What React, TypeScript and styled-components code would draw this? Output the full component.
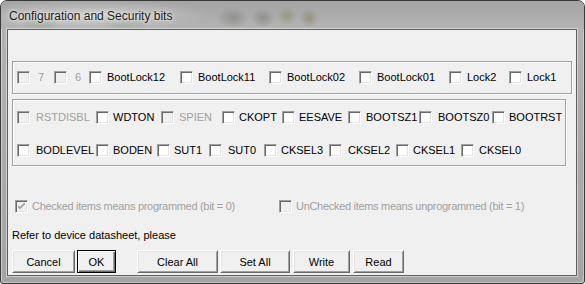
import React from "react";
import styled, { createGlobalStyle } from "styled-components";

const GlobalStyle = createGlobalStyle`
  html, body { margin: 0; padding: 0; background: #ffffff; }
  body { font-family: "Liberation Sans", Arial, sans-serif; }
`;

const Window = styled.div`
  box-sizing: border-box;
  width: 585px;
  height: 284px;
  border: 1px solid #3a3a3a;
  border-radius: 7px 7px 3px 3px;
  background: linear-gradient(to bottom, #a6a6a6 0px, #b2b2b2 28px, #ababab 140px, #a4a4a4 284px);
  box-shadow: inset 1px 1px 0 rgba(255, 255, 255, 0.45), inset -1px -1px 0 rgba(255, 255, 255, 0.35);
  padding: 0 7px 7px 6px;
  display: flex;
  flex-direction: column;
  overflow: hidden;
`;

const TitleBar = styled.div`
  height: 28px;
  flex: none;
  margin: 0 -7px 0 -6px;
  padding-left: 8px;
  display: flex;
  align-items: center;
  background:
    radial-gradient(ellipse 16px 11px at 232px 17px, rgba(70, 70, 60, 0.28), transparent),
    radial-gradient(ellipse 12px 10px at 262px 17px, rgba(70, 80, 60, 0.3), transparent),
    radial-gradient(ellipse 10px 10px at 286px 15px, rgba(110, 120, 50, 0.35), transparent),
    radial-gradient(ellipse 10px 10px at 308px 17px, rgba(110, 100, 40, 0.35), transparent),
    radial-gradient(ellipse 20px 8px at 40px 25px, rgba(90, 140, 90, 0.25), transparent),
    radial-gradient(ellipse 25px 8px at 125px 25px, rgba(90, 140, 90, 0.2), transparent),
    radial-gradient(ellipse 120px 16px at 90px 14px, rgba(225, 225, 225, 0.55), transparent),
    linear-gradient(to bottom, #a4a4a4, #b4b4b4);
`;

const Title = styled.span`
  font-family: "Liberation Sans", Arial, sans-serif;
  font-size: 12px;
  color: #1a1a1a;
  text-shadow: 0 0 6px rgba(255, 255, 255, 0.9), 0 0 3px rgba(255, 255, 255, 0.8);
  margin-top: 1px;
`;

const Client = styled.div`
  flex: 1;
  box-sizing: border-box;
  background: #f0f0f0;
  border: 1px solid #5e5e5e;
  box-shadow: 0 0 0 1px rgba(235, 235, 235, 0.6);
  padding: 31px 4px 0 4px;
  display: flex;
  flex-direction: column;
  font-family: "Liberation Sans", Arial, sans-serif;
  font-size: 11px;
  line-height: 13px;
  color: #000;
`;

const Group = styled.div<{ $width: number; $rows: number }>`
  box-sizing: border-box;
  width: ${(p) => p.$width}px;
  border: 1px solid #a0a0a0;
  box-shadow: inset 1px 1px 0 #ffffff, 1px 1px 0 #ffffff;
  padding: ${(p) => (p.$rows > 1 ? "11px 0 8px 4px" : "9px 0 9px 4px")};
  display: flex;
  flex-direction: column;
  gap: 20px;
  & + & {
    margin-top: 5px;
  }
`;

const Row = styled.div<{ $indent?: number }>`
  display: flex;
  align-items: center;
  height: 13px;
  margin-left: ${(p) => p.$indent ?? 0}px;
`;

const Item = styled.div<{ $w?: number }>`
  display: flex;
  align-items: center;
  flex: none;
  width: ${(p) => (p.$w ? `${p.$w}px` : "auto")};
`;

const Box = styled.span<{ $disabled?: boolean }>`
  box-sizing: border-box;
  position: relative;
  flex: none;
  width: 13px;
  height: 13px;
  border-style: solid;
  border-width: 1px;
  border-color: #a0a0a0 #ffffff #ffffff #a0a0a0;
  box-shadow: inset 1px 1px 0 #696969, inset -1px -1px 0 #e3e3e3;
  background: ${(p) => (p.$disabled ? "#f0f0f0" : "#ffffff")};
`;

const Tick = styled.svg`
  position: absolute;
  left: 2px;
  top: 2px;
  width: 7px;
  height: 7px;
`;

const Caption = styled.span<{ $disabled?: boolean; $gap?: number; $tight?: boolean }>`
  margin-left: ${(p) => p.$gap ?? 5}px;
  white-space: nowrap;
  letter-spacing: ${(p) => (p.$tight ? "-0.3px" : "normal")};
  color: ${(p) => (p.$disabled ? "#a0a0a0" : "#000000")};
`;

const Note = styled.div`
  margin-top: 16px;
  height: 13px;
  white-space: nowrap;
`;

const Legend = styled(Row)`
  margin-top: 34px;
`;

const ButtonBar = styled.div`
  display: flex;
  margin-top: 8px;
`;

const Button = styled.button<{ $w: number; $gap?: number; $default?: boolean }>`
  box-sizing: border-box;
  width: ${(p) => p.$w}px;
  height: 23px;
  margin: 0 0 0 ${(p) => p.$gap ?? 0}px;
  padding: 0;
  background: #f0f0f0;
  font-family: "Liberation Sans", Arial, sans-serif;
  font-size: 11px;
  color: #000;
  cursor: default;
  ${(p) =>
    p.$default
      ? `border: 1px solid #000000;
         box-shadow: inset 1px 1px 0 #ffffff, inset -1px -1px 0 #696969, inset -2px -2px 0 #a0a0a0;`
      : `border-style: solid; border-width: 1px;
         border-color: #ffffff #696969 #696969 #ffffff;
         box-shadow: inset 1px 1px 0 #e3e3e3, inset -1px -1px 0 #a0a0a0;`}
`;

type Bit = { label: string; w?: number; disabled?: boolean; gap?: number; tight?: boolean };

const row1: Bit[] = [
  { label: "7", w: 37, disabled: true, gap: 8 },
  { label: "6", w: 35, disabled: true, gap: 8 },
  { label: "BootLock12", w: 91 },
  { label: "BootLock11", w: 89 },
  { label: "BootLock02", w: 90 },
  { label: "BootLock01", w: 90 },
  { label: "Lock2", w: 60 },
  { label: "Lock1" },
];

const row2: Bit[] = [
  { label: "RSTDISBL", w: 79, disabled: true, gap: 6 },
  { label: "WDTON", w: 65, gap: 4 },
  { label: "SPIEN", w: 61, disabled: true },
  { label: "CKOPT", w: 60, gap: 4 },
  { label: "EESAVE", w: 66, gap: 4 },
  { label: "BOOTSZ1", w: 71 },
  { label: "BOOTSZ0", w: 73, gap: 6 },
  { label: "BOOTRST", gap: 4 },
];

const row3: Bit[] = [
  { label: "BODLEVEL", w: 79, gap: 6 },
  { label: "BODEN", w: 61, gap: 4 },
  { label: "SUT1", w: 52, gap: 4 },
  { label: "SUT0", w: 55, gap: 6 },
  { label: "CKSEL3", w: 65, gap: 4 },
  { label: "CKSEL2", w: 67, gap: 6 },
  { label: "CKSEL1", w: 65, gap: 4 },
  { label: "CKSEL0", gap: 5 },
];

const CheckItem: React.FC<Bit & { checked?: boolean }> = ({ label, w, disabled, gap, tight, checked }) => (
  <Item $w={w}>
    <Box $disabled={disabled}>
      {checked && (
        <Tick viewBox="0 0 7 7">
          <polyline points="0,3 2,5 7,0" fill="none" stroke={disabled ? "#a0a0a0" : "#000"} strokeWidth="1.6" />
        </Tick>
      )}
    </Box>
    <Caption $disabled={disabled} $gap={gap} $tight={tight}>
      {label}
    </Caption>
  </Item>
);

const BitRow: React.FC<{ bits: Bit[] }> = ({ bits }) => (
  <Row>
    {bits.map((b) => (
      <CheckItem key={b.label} {...b} />
    ))}
  </Row>
);

export default function App() {
  return (
    <>
      <GlobalStyle />
      <Window>
        <TitleBar>
          <Title>Configuration and Security bits</Title>
        </TitleBar>
        <Client>
          <Group $width={560} $rows={1}>
            <BitRow bits={row1} />
          </Group>
          <Group $width={554} $rows={2}>
            <BitRow bits={row2} />
            <BitRow bits={row3} />
          </Group>
          <Legend $indent={3}>
            <CheckItem label="Checked items means programmed (bit = 0)" w={264} disabled checked tight gap={4} />
            <CheckItem label="UnChecked items means unprogrammed (bit = 1)" disabled tight gap={4} />
          </Legend>
          <Note>Refer to device datasheet, please</Note>
          <ButtonBar>
            <Button $w={63}>Cancel</Button>
            <Button $w={39} $gap={2} $default>
              OK
            </Button>
            <Button $w={81} $gap={21}>
              Clear All
            </Button>
            <Button $w={70} $gap={2}>
              Set All
            </Button>
            <Button $w={57} $gap={3}>
              Write
            </Button>
            <Button $w={51} $gap={3}>
              Read
            </Button>
          </ButtonBar>
        </Client>
      </Window>
    </>
  );
}
